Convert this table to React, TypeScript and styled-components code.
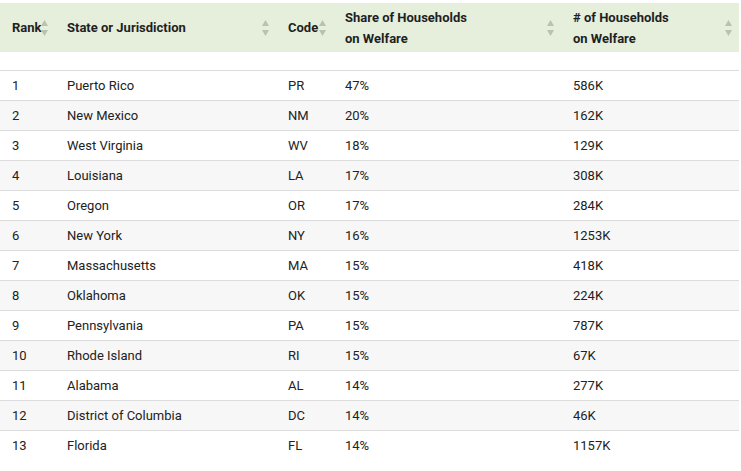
import React from "react";
import styled, { createGlobalStyle } from "styled-components";

const Global = createGlobalStyle`
  html, body { margin: 0; padding: 0; background: #ffffff; }
  body { font-family: Roboto, "Liberation Sans", Arial, sans-serif; }
`;

const Wrap = styled.div`
  padding: 3px 2px 0 0;
`;

const Table = styled.table`
  width: 739px;
  border-collapse: collapse;
  table-layout: fixed;
  font-family: Roboto, "Liberation Sans", Arial, sans-serif;
  font-size: 13px;
  color: #222222;
`;

const Th = styled.th<{ $w: number }>`
  position: relative;
  width: ${(p) => p.$w}px;
  height: 49px;
  box-sizing: border-box;
  padding: 0 24px 0 12px;
  background: #e6eedc;
  text-align: left;
  vertical-align: middle;
  font-weight: 700;
  font-size: 13px;
  line-height: 21px;
  color: #1f1f1f;
`;

const SortIcon = styled.svg`
  position: absolute;
  right: 6px;
  top: 50%;
  margin-top: -9px;
  width: 9px;
  height: 18px;
`;

const Spacer = styled.tr`
  height: 18px;
  td { padding: 0; border-bottom: 1px solid #dcdcdc; }
`;

const Row = styled.tr<{ $alt: boolean }>`
  height: 30px;
  background: ${(p) => (p.$alt ? "#f7f7f7" : "#ffffff")};
`;

const Td = styled.td`
  padding: 0 12px;
  height: 30px;
  box-sizing: border-box;
  vertical-align: middle;
  white-space: nowrap;
  color: #222222;
  border-top: 1px solid #dcdcdc;
`;

const Sort = () => (
  <SortIcon viewBox="0 0 9 18">
    <path d="M4.5 1 L8 7 L1 7 Z" fill="#b9c2b1" />
    <path d="M1 11 L8 11 L4.5 17 Z" fill="#b9c2b1" />
  </SortIcon>
);

const cols: { label: React.ReactNode; w: number }[] = [
  { label: "Rank", w: 55 },
  { label: "State or Jurisdiction", w: 221 },
  { label: "Code", w: 57 },
  { label: (<>Share of Households<br />on Welfare</>), w: 228 },
  { label: (<># of Households<br />on Welfare</>), w: 178 },
];

const data: [number, string, string, string, string][] = [
  [1, "Puerto Rico", "PR", "47%", "586K"],
  [2, "New Mexico", "NM", "20%", "162K"],
  [3, "West Virginia", "WV", "18%", "129K"],
  [4, "Louisiana", "LA", "17%", "308K"],
  [5, "Oregon", "OR", "17%", "284K"],
  [6, "New York", "NY", "16%", "1253K"],
  [7, "Massachusetts", "MA", "15%", "418K"],
  [8, "Oklahoma", "OK", "15%", "224K"],
  [9, "Pennsylvania", "PA", "15%", "787K"],
  [10, "Rhode Island", "RI", "15%", "67K"],
  [11, "Alabama", "AL", "14%", "277K"],
  [12, "District of Columbia", "DC", "14%", "46K"],
  [13, "Florida", "FL", "14%", "1157K"],
];

export default function App() {
  return (
    <Wrap>
      <Global />
      <Table>
        <thead>
          <tr>
            {cols.map((c, i) => (
              <Th key={i} $w={c.w}>
                {c.label}
                <Sort />
              </Th>
            ))}
          </tr>
        </thead>
        <tbody>
          <Spacer>
            <td colSpan={5} />
          </Spacer>
          {data.map((r, i) => (
            <Row key={r[0]} $alt={i % 2 === 1}>
              {r.map((v, j) => (
                <Td key={j}>{v}</Td>
              ))}
            </Row>
          ))}
        </tbody>
      </Table>
    </Wrap>
  );
}
